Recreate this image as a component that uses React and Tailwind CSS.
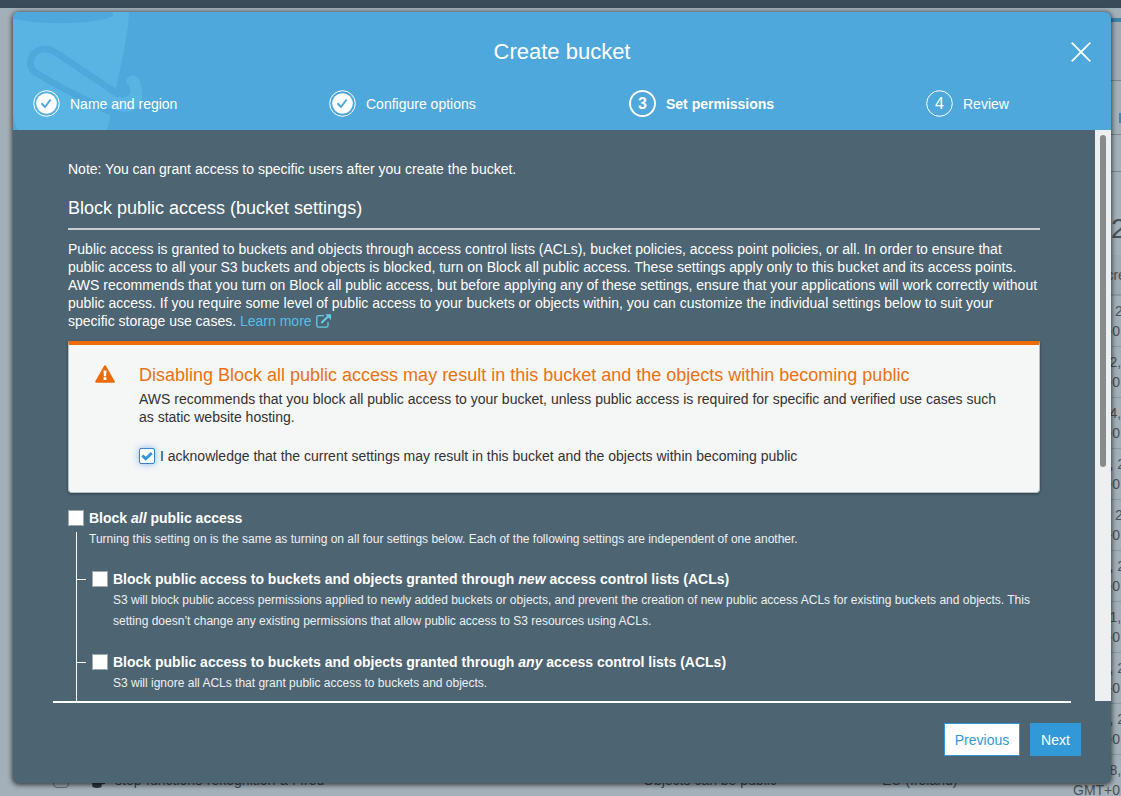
import React from "react";

const dates = [
  "Jan 9, 2020",
  "Nov 22, 2019",
  "Nov 24, 2019",
  "Nov 6, 2019",
  "Jan 7, 2019",
  "Nov 5, 2018",
  "Nov 21, 2018",
  "Nov 7, 2018",
  "Nov 3, 2018",
  "Nov 28, 2018",
];

function Backdrop() {
  return (
    <div className="h-[796px] w-[1121px] bg-[#a3b0b9] text-sm text-[#46525c]">
      <div className="h-2 bg-[#394a59]" />
      <div className="flex h-[788px]">
        <div className="flex flex-1 flex-col justify-end">
          <div className="flex h-[25px] items-start whitespace-nowrap text-[#394750]">
            <div className="ml-[53px] mt-px h-4 w-4 rounded-sm border border-[#5d6d78]" />
            <svg className="ml-[22px] mt-px h-4 w-4" viewBox="0 0 16 16" fill="#2b3840">
              <path d="M0 2h12l-1.500 13q-4.500 2-9 0z" />
              <path d="M9 8l5 3q1 2-4 1z" />
            </svg>
            <span className="-mt-px ml-2 w-[528px]">step-functions-rekognition-a-l-fred</span>
            <span className="-mt-px w-[239px]">Objects can be public</span>
            <span className="-mt-px">EU (Ireland)</span>
          </div>
        </div>
        <div className="flex w-12 flex-col overflow-hidden whitespace-nowrap">
          <div className="mt-[10px] h-1 shrink-0 bg-[#3f82ab]" />
          <div className="h-[59px] shrink-0 border-b border-[#7b8790] bg-[#a0abb3]" />
          <div className="flex h-[54px] shrink-0 items-end justify-end border-b border-[#7b8790] pb-[11px]">
            <div className="h-[10px] w-[2px] bg-[#3c88ab]" />
          </div>
          <div className="h-[37px] shrink-0 border-b border-[#7b8790]" />
          <div className="h-[83px] shrink-0 pl-[38px] pt-[41px] text-[28px] leading-[32px]">24</div>
          <div className="h-[41px] shrink-0 border-b-2 border-[#8c99a2] bg-[#9eabb4] pt-[10px]">Date created</div>
          {dates.map((date) => (
            <div key={date} className="h-[51px] shrink-0 border-b border-[#8c99a2] pt-[5px] leading-5">
              <div>{date}</div>
              <div>GMT+0100</div>
            </div>
          ))}
        </div>
      </div>
    </div>
  );
}

function BucketArt() {
  return (
    <svg className="absolute left-0 top-0 h-[118px] w-[134px]" viewBox="39 36 402 354">
      <path fill="#58b5e3" d="M39 36H387C385 100 365 180 348 268L331 345Q330 370 318 390H53Q43 372 39 345Z" />
      <ellipse cx="180" cy="42" rx="160" ry="28" fill="#4fa8dc" />
      <path d="M353 282L166 157C127 131 91 159 91 189C91 211 107 218 119 225C180 263 245 294 340 340" fill="none" stroke="#4fa8dc" strokeWidth="20" />
      <path d="M378 246C380 229 397 222 410 231C427 247 431 284 423 308C415 325 395 335 375 335C355 334 330 326 300 311L318 272C345 294 374 298 388 284C394 270 389 256 378 246Z" fill="#58b5e3" />
      <path d="M335 258L348 268Q350 274 365 274Q380 270 384 256Q396 273 388 284Q374 297 350 290L322 272Z" fill="#4fa8dc" />
    </svg>
  );
}

function StepIcon({ done, active, number }) {
  return (
    <svg className="h-[27px] w-[27px] shrink-0" viewBox="0 0 27 27">
      <circle cx="13.500" cy="13.500" r={active ? 12.5 : 12.8} fill="none" stroke="white" strokeWidth={active ? 2 : 1} />
      {done ? (
        <>
          <circle cx="13.500" cy="13.500" r="10.300" fill="white" />
          <path d="M8.500 13.300L12 17L17.600 9.500" fill="none" stroke="#4fa8dc" strokeWidth="2" />
        </>
      ) : (
        <text x="13.500" y="19" textAnchor="middle" fill="white" fontSize="16" fontWeight={active ? 700 : 400}>
          {number}
        </text>
      )}
    </svg>
  );
}

function Step({ label, ...icon }) {
  return (
    <div className={icon.active ? "flex items-center gap-[10px] font-bold" : "flex items-center gap-[10px]"}>
      <StepIcon {...icon} />
      <span>{label}</span>
    </div>
  );
}

function Header() {
  return (
    <header className="relative h-[118px] shrink-0 overflow-hidden rounded-t-md bg-[#4fa8dc] text-white">
      <BucketArt />
      <div className="relative flex h-[78px] items-center justify-center text-[22px]">
        <h1>Create bucket</h1>
        <button className="absolute right-5 top-[30px]" aria-label="Close">
          <svg className="h-5 w-5" viewBox="0 0 20 20" stroke="white" strokeWidth="1.800">
            <path d="M.7.7L19.300 19.300M19.300.7L.7 19.300" />
          </svg>
        </button>
      </div>
      <div className="relative grid h-[27px] grid-cols-[296px_300px_297px_1fr] pl-5 text-sm">
        <Step done label="Name and region" />
        <Step done label="Configure options" />
        <Step active number="3" label="Set permissions" />
        <Step number="4" label="Review" />
      </div>
    </header>
  );
}

function Alert() {
  return (
    <section className="mt-[11px] flex h-[152px] rounded-b-sm border border-t-4 border-[#b5bec4] border-t-[#ec6b08] bg-[#f5f6f6] pl-[26px] text-sm leading-[18px] text-[#333] shadow-[0_1px_3px_rgba(0,0,0,0.4)]">
      <svg className="mt-[20px] h-[18px] w-5 shrink-0" viewBox="0 0 20 18">
        <path d="M10 1.200L18.800 16.800H1.200Z" fill="#ec6b08" stroke="#ec6b08" strokeWidth="2" strokeLinejoin="round" />
        <path d="M8.500 5.500h3l-.4 5.800H8.900zM8.600 12.300h2.800v2.600H8.600z" fill="#fff" />
      </svg>
      <div className="ml-6 w-[870px]">
        <h3 className="mt-[19px] text-lg leading-[22px] text-[#ec7211]">
          Disabling Block all public access may result in this bucket and the objects within becoming public
        </h3>
        <p className="mt-1">
          AWS recommends that you block all public access to your bucket, unless public access is required for specific
          and verified use cases such as static website hosting.
        </p>
        <label className="mt-[21px] flex items-center gap-[5px]">
          <span className="flex h-4 w-4 items-center justify-center rounded-[2px] border border-[#3184d8] bg-white shadow-[0_0_7px_#85b9e8]">
            <svg className="h-3 w-3" viewBox="0 0 12 12" fill="none" stroke="#2e97dc" strokeWidth="2.900">
              <path d="M1.300 5.500L4.700 8.800L10.800 3" />
            </svg>
          </span>
          I acknowledge that the current settings may result in this bucket and the objects within becoming public
        </label>
      </div>
    </section>
  );
}

function Setting({ children, note }) {
  return (
    <div className="flex gap-[5px]">
      <span className="mt-px h-4 w-4 shrink-0 border border-[#a3a8aa] bg-white" />
      <div>
        <h4 className="text-sm font-bold leading-[18px]">{children}</h4>
        <p className="mt-[2px] text-xs leading-[21px] text-[#eef1f3]">{note}</p>
      </div>
    </div>
  );
}

function NestedSetting(props) {
  return (
    <div className="flex">
      <span className="mr-[6px] mt-[9px] h-px w-[9px] shrink-0 bg-white" />
      <Setting {...props} />
    </div>
  );
}

export default function App() {
  return (
    <div className="relative h-[796px] w-[1121px] overflow-hidden font-['Liberation_Sans',Arial,sans-serif]">
      <Backdrop />
      <main className="absolute left-[13px] top-3 flex h-[771px] w-[1098px] flex-col rounded-md bg-[#4d6472] text-white shadow-[0_1px_5px_1px_rgba(0,0,0,0.65)]">
        <Header />
        <div className="flex h-[571px] shrink-0">
          <div className="w-[1082px] overflow-hidden px-[55px] text-sm leading-[18px]">
            <p className="mt-[30px]">Note: You can grant access to specific users after you create the bucket.</p>
            <h2 className="mt-[19px] h-[33px] border-b-2 border-[#c9cbce] text-lg leading-[22px]">
              Block public access (bucket settings)
            </h2>
            <p className="mt-[10px]">
              Public access is granted to buckets and objects through access control lists (ACLs), bucket policies,
              access point policies, or all. In order to ensure that public access to all your S3 buckets and objects is
              blocked, turn on Block all public access. These settings apply only to this bucket and its access points.
              AWS recommends that you turn on Block all public access, but before applying any of these settings, ensure
              that your applications will work correctly without public access. If you require some level of public
              access to your buckets or objects within, you can customize the individual settings below to suit your
              specific storage use cases.{" "}
              <a className="text-[#55bfe7]">
                Learn more{" "}
                <svg className="ml-px inline h-[14px] w-[15px] align-[-2px]" viewBox="0 0 15 14" fill="none" stroke="#63cdea">
                  <path d="M8 1.700H2.500Q.8 1.700.8 3.400V11.500Q.8 13.200 2.500 13.200H10.300Q12 13.200 12 11.500V8" strokeWidth="1.300" />
                  <path d="M5.300 9L12.300 2.300" strokeWidth="2" />
                  <path d="M9.300.3H15V6Z" fill="#63cdea" stroke="none" />
                </svg>
              </a>
            </p>
            <Alert />
            <div className="mt-4">
              <Setting note="Turning this setting on is the same as turning on all four settings below. Each of the following settings are independent of one another.">
                Block <em>all</em> public access
              </Setting>
            </div>
            <div className="-mt-[18px] ml-2 flex h-[200px] flex-col gap-[21px] border-l border-white pt-[38px]">
              <NestedSetting note="S3 will block public access permissions applied to newly added buckets or objects, and prevent the creation of new public access ACLs for existing buckets and objects. This setting doesn’t change any existing permissions that allow public access to S3 resources using ACLs.">
                Block public access to buckets and objects granted through <em>new</em> access control lists (ACLs)
              </NestedSetting>
              <NestedSetting note="S3 will ignore all ACLs that grant public access to buckets and objects.">
                Block public access to buckets and objects granted through <em>any</em> access control lists (ACLs)
              </NestedSetting>
            </div>
          </div>
          <div className="w-4 bg-[#eeeff0] pl-[5px] pt-[5px]">
            <div className="h-[332px] w-[6px] rounded-full bg-[#888b8c]" />
          </div>
        </div>
        <footer className="text-sm">
          <div className="mx-10 h-[2px] bg-white" />
          <div className="mt-5 flex justify-end gap-[10px] pr-[30px]">
            <button className="h-[33px] w-[76px] border border-[#3299d9] bg-white text-[#3299d9]">Previous</button>
            <button className="h-[33px] w-[51px] bg-[#3299d9]">Next</button>
          </div>
        </footer>
      </main>
    </div>
  );
}
